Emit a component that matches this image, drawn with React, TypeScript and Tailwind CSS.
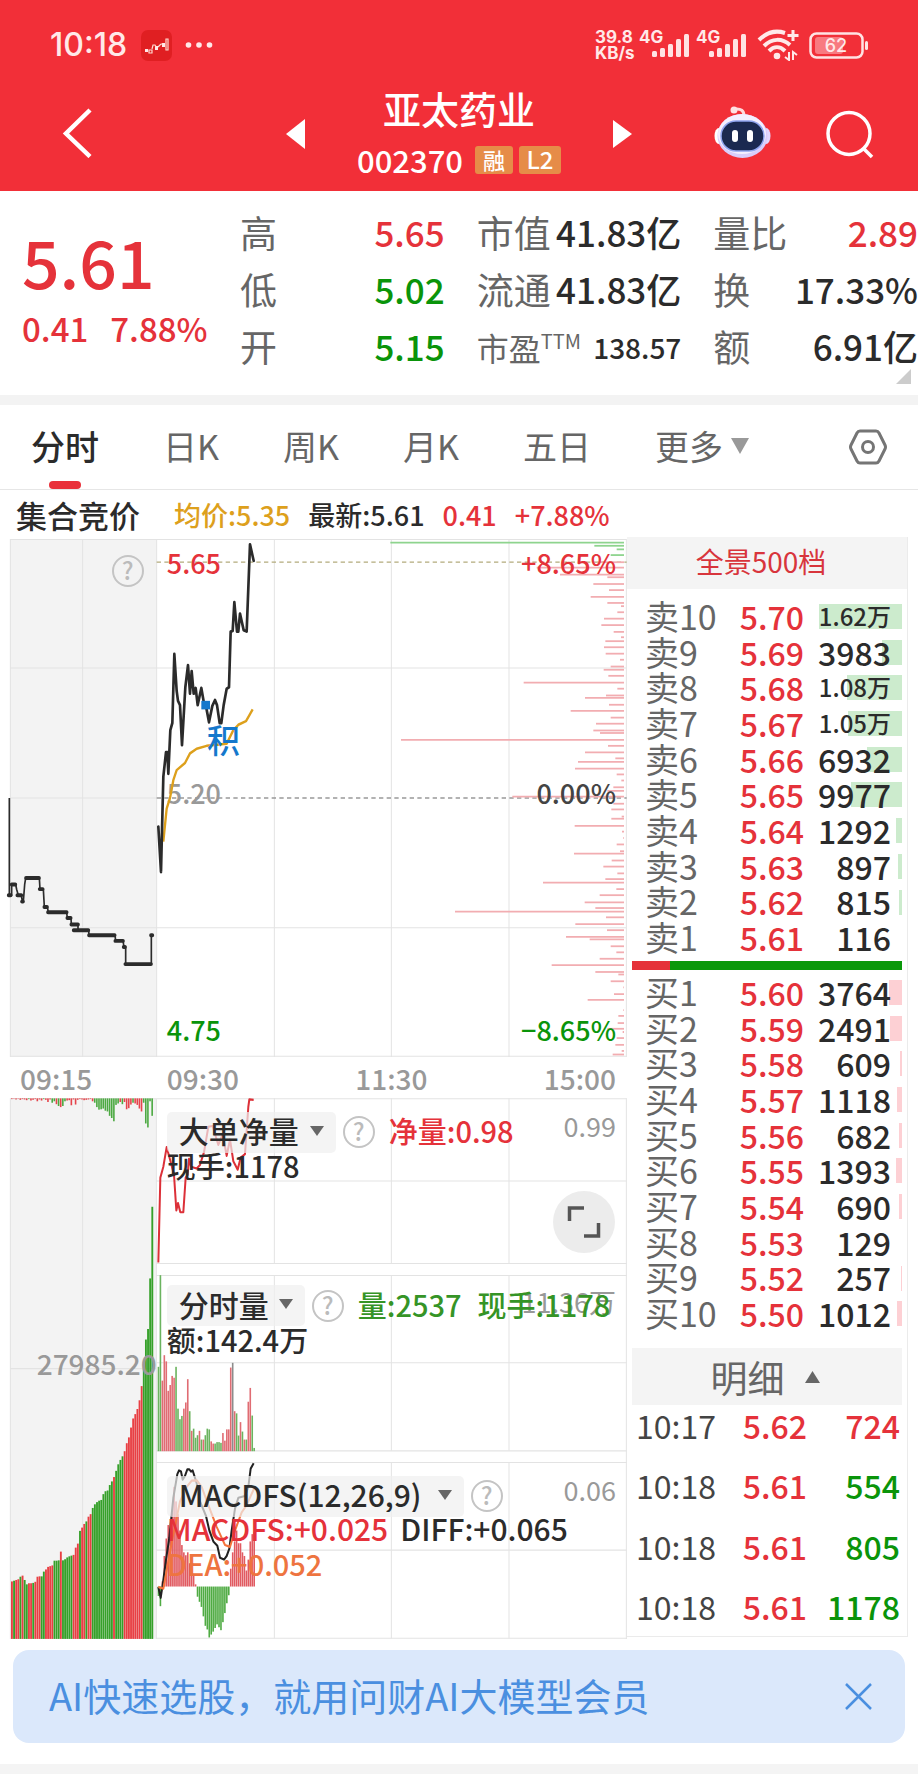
import { ReactNode } from 'react'
import clsx from 'clsx'

const RED = '#e5323a'
const GREEN = '#0a940a'

type Level = { label: string; price: string; volume: string; bar: number }

const asks: Level[] = [
  { label: '卖10', price: '5.70', volume: '1.62万', bar: 83 },
  { label: '卖9', price: '5.69', volume: '3983', bar: 20 },
  { label: '卖8', price: '5.68', volume: '1.08万', bar: 55 },
  { label: '卖7', price: '5.67', volume: '1.05万', bar: 54 },
  { label: '卖6', price: '5.66', volume: '6932', bar: 35 },
  { label: '卖5', price: '5.65', volume: '9977', bar: 51 },
  { label: '卖4', price: '5.64', volume: '1292', bar: 6 },
  { label: '卖3', price: '5.63', volume: '897', bar: 4 },
  { label: '卖2', price: '5.62', volume: '815', bar: 3 },
  { label: '卖1', price: '5.61', volume: '116', bar: 0 },
]

const bids: Level[] = [
  { label: '买1', price: '5.60', volume: '3764', bar: 13 },
  { label: '买2', price: '5.59', volume: '2491', bar: 12 },
  { label: '买3', price: '5.58', volume: '609', bar: 2 },
  { label: '买4', price: '5.57', volume: '1118', bar: 5 },
  { label: '买5', price: '5.56', volume: '682', bar: 3 },
  { label: '买6', price: '5.55', volume: '1393', bar: 6 },
  { label: '买7', price: '5.54', volume: '690', bar: 3 },
  { label: '买8', price: '5.53', volume: '129', bar: 0 },
  { label: '买9', price: '5.52', volume: '257', bar: 1 },
  { label: '买10', price: '5.50', volume: '1012', bar: 5 },
]

const trades = [
  { time: '10:17', price: '5.62', volume: '724', up: true },
  { time: '10:18', price: '5.61', volume: '554', up: false },
  { time: '10:18', price: '5.61', volume: '805', up: false },
  { time: '10:18', price: '5.61', volume: '1178', up: false },
]

const pricePoints =
  '475,830 483,957 490,690 498,622 502,622 505,682 511,560 517,540 523,347 530,450 534,478 540,490 546,602 556,440 564,378 570,458 575,395 581,458 587,442 593,490 604,442 611,480 617,488 627,538 637,492 645,476 651,490 659,540 664,540 671,490 680,444 687,440 692,284 698,282 703,202 711,284 715,284 720,234 731,280 740,284 750,40 761,86'
const averagePoints =
  '490,872 500,780 510,750 520,700 530,672 555,652 570,625 590,612 620,604 680,598 700,560 715,545 738,535 750,515 758,502'
const auctionPoints =
  '28,750 28,1022 35,1022 35,992 47,992 50,1006 55,1022 64,1022 67,1040 70,1040 74,992 77,974 118,974 120,1005 130,1005 133,1055 142,1055 145,1070 200,1070 202,1086 213,1086 214,1104 234,1104 234,1120 266,1120 267,1134 345,1134 347,1150 369,1150 372,1167 377,1167 377,1215 454,1215 454,1134'
const auctionSteps =
  'M26 1022H32M35 992H46M52 1022H64M66 1040H69M78 974H117M119 1005H128M133 1055H141M144 1070H200M202 1086H212M214 1104H234M221 1120H265M267 1134H344M346 1150H369M371 1167H375M376 1215H453M453 1134H457'

// [y, left edge] of the chips distribution, drawn against the right side
const askDepth = [[35, 1171], [44, 1783], [54, 1850], [70, 1832]]
const bidDepth = [
  [90, 832], [105, 650], [125, 720], [132, 862], [151, 820], [168, 867], [187, 812], [204, 862], [213, 903], [230, 892],
  [248, 852], [266, 844], [285, 881], [300, 903], [311, 856], [328, 852], [346, 857], [363, 900], [382, 872], [391, 851],
  [408, 865], [427, 611], [444, 892], [463, 858], [470, 795], [489, 867], [506, 752], [525, 872], [542, 828], [561, 820],
  [568, 840], [587, 243], [604, 864], [622, 795], [639, 886], [649, 774], [668, 765], [684, 890], [701, 904], [720, 880],
  [730, 862], [746, 577], [766, 880], [782, 874], [802, 905], [808, 874], [828, 764], [844, 906], [862, 910], [880, 890],
  [899, 900], [906, 762], [925, 875], [942, 850], [961, 892], [977, 856], [987, 669], [1005, 889], [1022, 839], [1042, 794],
  [1058, 826], [1068, 405], [1084, 858], [1103, 766], [1120, 861], [1139, 738], [1146, 809], [1165, 872], [1182, 889],
  [1200, 839], [1218, 695], [1237, 826], [1244, 895], [1263, 872], [1280, 910], [1299, 882], [1315, 803], [1344, 910],
  [1360, 895], [1380, 893], [1396, 862], [1405, 908], [1422, 890], [1441, 886], [1458, 905], [1468, 878],
]

const auctionVolume = [
  1380, 1378, 1376, 1374, 1367, 1364, 1376, 1388, 1385, 1385, 1384, 1381, 1367, 1366, 1366, 1353, 1347, 1340, 1338, 1336,
  1323, 1323, 1322, 1298, 1322, 1319, 1314, 1311, 1309, 1307, 1287, 1276, 1241, 1232, 1222, 1215, 1202, 1195, 1178, 1168,
  1162, 1158, 1156, 1140, 1132, 1130, 1115, 1105, 1093, 1076, 1058, 1046, 1036, 1022, 1000, 984, 957, 932, 920, 906, 882,
  843, 795, 715, 686, 547, 350,
]
const auctionVolumeSides = 'rgrrgrggrrgrrrggrrrrgggrgggggrrrgrrgrrggggggggggrggggrrrrrrrrrggggg'

const auctionUnmatched = [
  54, 53, 55, 53, 56, 54, 55, 57, 54, 58, 56, 54, 60, 55, 58, 54, 56, 62, 55, 64, 60, 68, 73, 76, 73, 60, 58, 57, 71, 55,
  69, 56, 54, 55, 57, 56, 55, 54, 60, 64, 76, 83, 82, 80, 86, 88, 100, 106, 115, 70, 66, 62, 68, 62, 82, 79, 69, 64, 66,
  70, 80, 88, 64, 121, 132, 60, 100,
]
const auctionUnmatchedSides = 'rrrrrrrrgrrrrrrgrrrggrgrggrrrrrrrrrrrrrggggggggggggrgrrrrgrrrrggggg'

const minuteVolume = [
  790, 538, 828, 758, 775, 856, 840, 815, 820, 790, 905, 934, 925, 905, 888, 824, 912, 966, 960, 985, 978, 966, 990, 990,
  978, 960, 962, 995, 1001, 1001, 997, 997, 999, 972, 993, 962, 962, 792, 779, 912, 918, 979, 942, 968, 990, 990, 886,
  848, 924, 1013,
]
const minuteVolumeSides = 'ggrrrrrrrggggrrrgrgggrgrgggrrggggrrrrrkrggrgrgrrgg'

const macdBars = [
  1420, 1448, 1380, 1310, 1262, 1225, 1235, 1190, 1120, 1160, 1195, 1240, 1280, 1300, 1308, 1300, 1330, 1345, 1365, 1388,
  1422, 1436, 1450, 1476, 1502, 1512, 1534, 1526, 1518, 1508, 1498, 1506, 1514, 1492, 1467, 1440, 1418, 1345, 1300, 1270,
  1240, 1275, 1275, 1300, 1310, 1350, 1320, 1270, 1250, 1245,
]

const netPoints =
  '475,503 481,270 490,240 500,186 510,220 522,262 529,360 534,340 541,365 550,365 557,270 563,262 567,218 573,240 590,245 600,235 612,200 625,130 638,128 650,165 655,180 668,150 680,210 690,165 700,225 713,248 722,215 735,205 745,75 748,55 761,56'
const diffPoints =
  '475,1395 482,1425 488,1390 498,1320 508,1260 520,1150 532,1085 537,1075 543,1078 548,1100 555,1090 562,1072 568,1072 573,1078 578,1075 590,1110 600,1160 618,1200 628,1240 640,1270 652,1282 660,1315 672,1320 680,1310 688,1290 695,1240 705,1180 715,1150 735,1145 745,1120 752,1070 761,1055'
const deaPoints =
  '475,1395 490,1400 500,1350 520,1250 540,1160 560,1120 575,1103 590,1102 605,1120 625,1170 650,1230 675,1280 690,1285 705,1240 725,1190 740,1170 752,1145 762,1125'

function Signal() {
  return (
    <svg width="38" height="24" viewBox="0 0 38 24" fill="#ffe3e3" aria-hidden="true">
      <rect x="0" y="17" width="5" height="6" rx="1.5" />
      <rect x="8" y="14" width="5" height="9" rx="1.5" />
      <rect x="16" y="10" width="5" height="13" rx="1.5" />
      <rect x="24" y="5" width="5" height="18" rx="1.5" />
      <rect x="32" y="0" width="5" height="23" rx="1.5" />
    </svg>
  )
}

function StatusBar() {
  return (
    <div className="flex h-[66px] items-start justify-between pt-[27px] pr-[49px] pl-[50px] text-[#ffe9e9]">
      <div className="flex h-9 items-center">
        <span className="font-[Inter,'Noto_Sans_CJK_SC',sans-serif] text-[32px] leading-9 font-medium">10:18</span>
        <svg className="ml-[14px]" width="31" height="31" viewBox="0 0 31 31" aria-hidden="true">
          <rect width="31" height="31" rx="7" fill="#e01f22" />
          <path d="M4 19h3v3H4zM14 16h3v4h-3zM21 13h3v4h-3z" fill="#ffe9e9" />
          <path d="M8 20h3v3H8zM11 19l1-4h2l1 2M17 17l3-3M20 14h2M25 9h2v11h-2z" fill="none" stroke="#ffd9d0" strokeWidth="1.2" />
        </svg>
        <svg className="ml-[13px]" width="28" height="6" viewBox="0 0 28 6" fill="#ffe9e9" aria-hidden="true">
          <circle cx="3.5" cy="3" r="2.8" />
          <circle cx="14" cy="3" r="2.8" />
          <circle cx="24.5" cy="3" r="2.8" />
        </svg>
      </div>
      <div className="flex h-9 items-start font-[Inter,'Noto_Sans_CJK_SC',sans-serif] text-[17px] leading-4 font-bold">
        <div className="w-[44px] pt-[2px]">
          <div>39.8</div>
          <div>KB/s</div>
        </div>
        <div className="relative w-[57px] pt-[2px]">
          4G
          <span className="absolute top-[7px] left-[13px]"><Signal /></span>
        </div>
        <div className="relative w-[61px] pt-[2px]">
          4G
          <span className="absolute top-[7px] left-[13px]"><Signal /></span>
        </div>
        <svg className="mt-[2px]" width="44" height="32" viewBox="0 0 44 32" fill="none" stroke="#ffe9e9" aria-hidden="true">
          <path d="M2 11C10 3 19 1 28 4" strokeWidth="4" />
          <path d="M7 17c8-8 18-8 26-1" strokeWidth="4" />
          <path d="M12 22c5-5 11-5 16 0" strokeWidth="4" />
          <circle cx="20" cy="27" r="3.3" fill="#ffe9e9" stroke="none" />
          <path d="M36 1v11M30.5 6.500h11" strokeWidth="3" />
          <path d="M32 23v8l-4-3M36 31v-8l4 3" strokeWidth="2" />
        </svg>
        <svg className="mt-[5px] ml-[8px]" width="60" height="27" viewBox="0 0 60 27" aria-hidden="true">
          <rect x="1.5" y="1.5" width="52" height="24" rx="6" fill="none" stroke="#ffe3e3" strokeWidth="2.5" />
          <rect x="6" y="5" width="28" height="17" rx="3" fill="#f87a80" />
          <rect x="56" y="9" width="3" height="9" rx="1.5" fill="#ffe3e3" />
          <text x="27" y="20" textAnchor="middle" fontSize="18" fontWeight="500" fill="#ffe9e9">62</text>
        </svg>
      </div>
    </div>
  )
}

function Robot() {
  return (
    <svg width="57" height="53" viewBox="0 0 57 53" aria-hidden="true">
      <path d="M21 3q9-1 9 7" fill="none" stroke="#ffd9dc" strokeWidth="3" />
      <circle cx="20" cy="4" r="3.5" fill="#ffe0e2" />
      <ellipse cx="5" cy="30" rx="4.5" ry="8" fill="#fff" />
      <ellipse cx="52" cy="30" rx="4.5" ry="8" fill="#e2d8ff" />
      <ellipse cx="28.5" cy="30" rx="25" ry="22" fill="#d9cdfb" />
      <ellipse cx="28" cy="28" rx="24" ry="20" fill="#f4efff" />
      <rect x="7" y="15" width="43" height="30" rx="15" fill="#1b2950" stroke="#8fa4ee" strokeWidth="1.5" />
      <rect x="18" y="24" width="6" height="12" rx="3" fill="#fff" />
      <rect x="33" y="24" width="6" height="12" rx="3" fill="#fff" />
    </svg>
  )
}

function Header() {
  return (
    <header className="bg-[#f22f38] text-white">
      <StatusBar />
      <div className="grid h-[125px] grid-cols-[1fr_auto_1fr] items-start">
        <button className="mt-[42px] ml-[60px] w-9" aria-label="返回">
          <svg width="34" height="50" viewBox="0 0 34 50" fill="none" stroke="#fff" strokeWidth="4.5" aria-hidden="true">
            <path d="M30 2 6 25.500 30 48.500" />
          </svg>
        </button>
        <div className="flex w-[346px] items-start justify-between">
          <button className="mt-[53px]" aria-label="上一只">
            <svg width="19" height="30" viewBox="0 0 19 30" fill="#fff" aria-hidden="true"><path d="M19 0v30L0 15z" /></svg>
          </button>
          <div className="flex flex-col items-center pt-5">
            <h1 className="text-[38px] leading-[44px] font-medium">亚太药业</h1>
            <div className="mt-[14px] flex items-center text-[31px] leading-8 font-medium">
              <span>002370</span>
              <span className="ml-[12px] h-7 w-[38px] rounded-[3px] bg-[#e68c48] text-center text-[22px] leading-[26px]">融</span>
              <span className="ml-[6px] h-7 w-[42px] rounded-[3px] bg-[#e68c48] text-center text-[24px] leading-[26px]">L2</span>
            </div>
          </div>
          <button className="mt-[54px]" aria-label="下一只">
            <svg width="19" height="28" viewBox="0 0 19 28" fill="#fff" aria-hidden="true"><path d="M0 0v28l19-14z" /></svg>
          </button>
        </div>
        <div className="flex justify-end pr-[44px]">
          <button className="mt-[40px]" aria-label="智能助手"><Robot /></button>
          <button className="mt-[44px] ml-[54px]" aria-label="搜索">
            <svg width="49" height="49" viewBox="0 0 49 49" fill="none" stroke="#fff" strokeWidth="3.5" aria-hidden="true">
              <circle cx="24" cy="23.5" r="21" />
              <path d="m38 38 9 9" />
            </svg>
          </button>
        </div>
      </div>
    </header>
  )
}

function Stat({ label, value, tone }: { label: ReactNode; value: string; tone?: string }) {
  return (
    <div className="flex h-[57px] items-center justify-between whitespace-nowrap">
      <dt className="text-[37px] text-[#666]">{label}</dt>
      <dd className={clsx('text-[35px] font-medium', tone || 'text-[#2b2b2b]')}>{value}</dd>
    </div>
  )
}

function Quote() {
  return (
    <section className="relative flex border-b-[10px] border-[#f3f3f3] pt-[13px] pb-5">
      <div className="w-[240px] shrink-0 pt-[18px] pl-[22px] font-medium text-[#e5323a]">
        <div className="text-[66px] leading-[76px]">5.61</div>
        <div className="mt-[10px] flex gap-[22px] text-[33px] leading-10">
          <span>0.41</span>
          <span>7.88%</span>
        </div>
      </div>
      <div className="grid flex-1 grid-cols-3 gap-8">
        <dl>
          <Stat label="高" value="5.65" tone="text-[#e5323a]" />
          <Stat label="低" value="5.02" tone="text-[#0a940a]" />
          <Stat label="开" value="5.15" tone="text-[#0a940a]" />
        </dl>
        <dl>
          <Stat label="市值" value="41.83亿" />
          <Stat label="流通" value="41.83亿" />
          <div className="flex h-[57px] items-center justify-between whitespace-nowrap">
            <dt className="flex items-start text-[32px] leading-9 text-[#666]">
              市盈<span className="text-[20px] leading-6">TTM</span>
            </dt>
            <dd className="text-[28px] font-medium text-[#2b2b2b]">138.57</dd>
          </div>
        </dl>
        <dl>
          <Stat label="量比" value="2.89" tone="text-[#e5323a]" />
          <Stat label="换" value="17.33%" />
          <Stat label="额" value="6.91亿" />
        </dl>
      </div>
      <svg className="absolute right-[7px] bottom-[11px]" width="15" height="15" viewBox="0 0 15 15" fill="#ccc" aria-hidden="true">
        <path d="M15 0v15H0z" />
      </svg>
    </section>
  )
}

function Tabs() {
  return (
    <nav className="flex h-[85px] items-stretch gap-16 border-b border-[#e6e6e6] pr-[31px] pl-[31px] text-[34px] text-[#666]">
      <button className="relative pb-1 font-medium text-[#2b2b2b]">
        分时
        <span className="absolute bottom-0 left-[18px] h-2 w-8 rounded-full bg-[#e9303a]" />
      </button>
      {['日K', '周K', '月K', '五日'].map((name) => (
        <button key={name} className="pb-1">{name}</button>
      ))}
      <button className="flex items-center gap-2 pb-1" aria-haspopup="menu">
        更多
        <svg width="18" height="17" viewBox="0 0 18 17" fill="#999" aria-hidden="true"><path d="M0 1h18L9 17z" /></svg>
      </button>
      <button className="ml-auto" aria-label="设置">
        <svg width="38" height="38" viewBox="0 0 38 38" fill="none" stroke="#757575" strokeWidth="3" strokeLinejoin="round" aria-hidden="true">
          <path d="M11 3h16q2 0 3 2l6 12q1 2 0 4l-6 12q-1 2-3 2H11q-2 0-3-2L2 21q-1-2 0-4L8 5q1-2 3-2z" />
          <circle cx="19" cy="19" r="5.5" />
        </svg>
      </button>
    </nav>
  )
}

function Help() {
  return (
    <button className="grid size-8 shrink-0 place-items-center rounded-full border-2 border-[#c4c4c4] text-[24px] leading-7 text-[#bbb]" aria-label="说明">
      <span className="-translate-y-px">?</span>
    </button>
  )
}

function Indicator({ name, width }: { name: string; width: string }) {
  return (
    <span className={clsx('relative block h-[41px] shrink-0 rounded-[5px] bg-[#efefef]/70', width)}>
      <select aria-label="指标" className="block h-[41px] w-full appearance-none bg-transparent pb-1 pl-3 text-[30px] leading-9 text-[#2b2b2b] font-medium">
        <option>{name}</option>
      </select>
      <svg className="pointer-events-none absolute top-[14px] right-3" width="14" height="10" viewBox="0 0 14 10" fill="#666" aria-hidden="true">
        <path d="M0 0h14L7 10z" />
      </svg>
    </span>
  )
}

function PriceChart() {
  return (
    <div className="relative h-[518px]">
      <svg className="absolute inset-0 size-full" viewBox="0 25 1881 1450" preserveAspectRatio="none" aria-hidden="true">
        <rect x="30" y="25" width="440" height="1450" fill="#f3f3f3" />
        <path d="M30 26H1880M30 386H1880M30 750H470M30 1113H1880M30 1473H1880M31 25V1475M248 25V1475M470 25V1475M823 25V1475M1174 25V1475M1527 25V1475M1879 25V1475" fill="none" stroke="#e3e3e3" strokeWidth="3" />
        <path d="M470 90H1880" stroke="#b3ab7c" strokeWidth="3.5" strokeDasharray="13 10" />
        <path d="M470 750H1880" stroke="#999" strokeWidth="3.5" strokeDasharray="13 10" />
        {askDepth.map(([y, x]) => (
          <path key={y} d={`M${x} ${y}H1872`} stroke="#8ed48e" strokeWidth="5" />
        ))}
        {bidDepth.map(([y, x]) => (
          <path key={y} d={`M${x + 960} ${y}H1872`} stroke="#f2adb1" strokeWidth="5" />
        ))}
        <g fill="none" strokeLinejoin="round">
          <polyline points={auctionPoints} stroke="#2b2b2b" strokeWidth="5" />
          <path d={auctionSteps} stroke="#2b2b2b" strokeWidth="11" strokeLinecap="round" />
        </g>
      </svg>
      <div className="absolute inset-0 flex text-[27px] leading-[34px] font-medium">
        <div className="flex w-1/4 justify-end pt-[16px] pr-[13px]"><Help /></div>
        <div className="flex flex-1 flex-col justify-between pt-[7px] pr-[11px] pb-[10px] pl-[10px]">
          <div className="flex justify-between text-[#e5323a]"><span>5.65</span><span>+8.65%</span></div>
          <div className="mb-[8px] flex justify-between"><span className="text-[#999]">5.20</span><span className="text-[#444]">0.00%</span></div>
          <div className="flex justify-between text-[#0a940a]"><span>4.75</span><span>−8.65%</span></div>
        </div>
      </div>
      <svg className="absolute inset-0 size-full" viewBox="0 25 1881 1450" preserveAspectRatio="none" fill="none" strokeLinejoin="round" aria-hidden="true">
        <polyline points={averagePoints} stroke="#dda01c" strokeWidth="7" />
        <polyline points={pricePoints} stroke="#2b2b2b" strokeWidth="8" strokeLinecap="round" />
        <rect x="604" y="478" width="26" height="24" fill="#1478cc" />
      </svg>
      <span className="absolute top-[182px] left-1/3 -ml-0.5 text-[33px] leading-9 font-medium text-[#1478cc]">积</span>
    </div>
  )
}

function bar(x: number, top: number, bottom: number, fill: string, key: number) {
  return <rect key={key} x={x} y={Math.min(top, bottom)} width="4.8" height={Math.abs(bottom - top)} fill={fill} />
}

function IndicatorCharts() {
  return (
    <div className="relative h-[542px]">
      <svg className="absolute inset-0 size-full" viewBox="0 51 1881 1490" preserveAspectRatio="none" aria-hidden="true">
        <rect x="30" y="52" width="438" height="1486" fill="#f3f3f3" />
        <path d="M30 53H1880M470 279H1880M470 506H1880M470 539H1880M470 779H1880M470 1021H1880M470 1053H1880M470 1294H1880M470 1536H1880M30 795H468M31 52V1538M248 52V1538M469 52V1538" fill="none" stroke="#e3e3e3" strokeWidth="3" />
        <path d="M823 52V506M823 539V1021M823 1053V1536M1174 52V506M1174 539V1021M1174 1053V1536M1527 52V506M1527 539V1021M1527 1053V1536M1879 52V1538" fill="none" stroke="#e3e3e3" strokeWidth="3" />
        {auctionVolume.map((top, i) => (
          <rect key={i} x={33 + i * 6.38} y={top} width="5.6" height={1538 - top} fill={auctionVolumeSides[i] === 'r' ? '#e83f43' : '#35a029'} />
        ))}
        <g opacity="0.9">
          {auctionUnmatched.map((end, i) => bar(33 + i * 6.38, 52, end, auctionUnmatchedSides[i] === 'r' ? '#e5323a' : '#3ba22f', i))}
        </g>
        {minuteVolume.map((top, i) =>
          bar(473 + i * 5.86, top, 1022, minuteVolumeSides[i] === 'r' ? '#e06c73' : minuteVolumeSides[i] === 'k' ? '#8c8c8c' : '#6bb35f', i)
        )}
        {macdBars.map((end, i) => bar(473 + i * 5.86, 1394, end, end < 1394 ? '#e15a61' : '#4fab43', i))}
        <g fill="none" strokeLinejoin="round">
          <polyline points={netPoints} stroke="#dc3038" strokeWidth="6" />
          <polyline points={diffPoints} stroke="#222" strokeWidth="6" />
          <polyline points={deaPoints} stroke="#f5743c" strokeWidth="6" />
        </g>
      </svg>
      <div className="absolute inset-0 flex text-[29px] leading-9 font-medium">
        <div className="flex w-1/4 justify-end pt-[247px] text-[28px] text-[#999]">27985.20</div>
        <div className="flex-1 pl-[10px]">
          <div className="h-[177px] pt-[10px]">
            <div className="flex items-center">
              <Indicator name="大单净量" width="w-[169px]" />
              <span className="ml-[7px]"><Help /></span>
              <span className="mb-1 ml-[14px] text-[#e5323a]">净量:0.98</span>
              <span className="mr-[11px] mb-3 ml-auto text-[27px] font-normal text-[#999]">0.99</span>
            </div>
            <div className="-mt-[9px] text-[#2b2b2b]">现手:1178</div>
          </div>
          <div className="relative h-[187px] pt-[10px]">
            <span className="absolute top-[9px] right-[11px] text-[27px] font-normal text-[#999]">11.36万</span>
            <div className="relative flex items-center text-[#359426]">
              <Indicator name="分时量" width="w-[138px]" />
              <span className="ml-[7px]"><Help /></span>
              <span className="mb-1 ml-[14px]">量:2537</span>
              <span className="mb-1 ml-[16px]">现手:1178</span>
            </div>
            <div className="-mt-[5px] text-[#2b2b2b]">额:142.4万</div>
          </div>
          <div className="pt-[10px]">
            <div className="flex items-center">
              <Indicator name="MACDFS(12,26,9)" width="w-[297px]" />
              <span className="ml-[7px]"><Help /></span>
              <span className="mr-[11px] mb-3 ml-auto text-[27px] font-normal text-[#999]">0.06</span>
            </div>
            <div className="-mt-[10px] flex gap-3 text-[30px] whitespace-nowrap">
              <span className="text-[#e5323a]">MACDFS:+0.025</span>
              <span className="text-[#2b2b2b]">DIFF:+0.065</span>
            </div>
            <div className="-mt-px text-[#ee7440]">DEA:+0.052</div>
          </div>
        </div>
      </div>
      <button className="absolute top-[93px] right-[12px] grid size-[62px] place-items-center rounded-full bg-[#ececec]" aria-label="全屏">
        <svg width="34" height="34" viewBox="0 0 34 34" fill="none" stroke="#555" strokeWidth="3.5" aria-hidden="true">
          <path d="M2.500 16V3H17M31.500 18v13H17" />
        </svg>
      </button>
    </div>
  )
}

function Levels({ rows, side }: { rows: Level[]; side: 'ask' | 'bid' }) {
  return (
    <table className="h-[357px] w-full table-fixed border-collapse leading-[34px]">
      <tbody>
        {rows.map((row) => (
          <tr key={row.label}>
            <th scope="row" className="w-[100px] p-0 pl-[18px] text-left align-middle text-[34px] font-normal text-[#666]">{row.label}</th>
            <td className="w-[77px] p-0 text-right align-middle text-[32px] font-medium text-[#e5323a]">{row.price}</td>
            <td className="relative p-0 pr-4 text-right align-middle font-medium text-[#2b2b2b]">
              <span
                className={clsx('absolute top-[6px] right-[5px] h-[25px]', side === 'ask' ? 'bg-[#ccebcd]' : 'bg-[#fdd0d4]')}
                style={{ width: row.bar }}
              />
              <span className={clsx('relative block', row.volume.includes('万') ? 'text-[24px]' : 'text-[32px]')}>{row.volume}</span>
            </td>
          </tr>
        ))}
      </tbody>
    </table>
  )
}

function OrderBook() {
  return (
    <aside className="w-[281px] shrink-0 border-r border-b border-[#ebebeb]">
      <button className="block h-[52px] w-full bg-[#f4f4f4] pr-3 pb-1 text-[28px] text-[#d8353c]">全景500档</button>
      <div className="pt-[9px]">
        <Levels rows={asks} side="ask" />
      </div>
      <div className="mt-[6px] mr-[5px] ml-[5px] flex h-[9px]">
        <div className="w-[14%] bg-[#e5323a]" />
        <div className="flex-1 bg-[#0a980a]" />
      </div>
      <div className="pt-[4px]">
        <Levels rows={bids} side="bid" />
      </div>
      <div className="mt-[17px] mr-[5px] ml-[5px]">
        <button className="flex h-[57px] w-full items-center justify-center gap-[20px] bg-[#f4f4f4] pr-[4px] text-[37px] leading-10 text-[#666]">
          明细
          <svg width="15" height="12" viewBox="0 0 15 12" fill="#666" aria-hidden="true"><path d="M7.500 0 15 12H0z" /></svg>
        </button>
      </div>
      <table className="-mt-[10px] h-[241px] w-full table-fixed border-collapse text-[32px] leading-9">
        <tbody>
          {trades.map((t, i) => (
            <tr key={i}>
              <td className="w-[90px] p-0 pl-[9px] text-[#444]">{t.time}</td>
              <td className="w-[90px] p-0 text-right font-medium text-[#e5323a]">{t.price}</td>
              <td className="p-0 pr-[7px] text-right font-medium" style={{ color: t.up ? RED : GREEN }}>{t.volume}</td>
            </tr>
          ))}
        </tbody>
      </table>
    </aside>
  )
}

export default function App() {
  return (
    <div className="bg-white font-['Noto_Sans_CJK_SC',sans-serif]">
      <Header />
      <Quote />
      <Tabs />
      <main className="flex pr-[10px]">
        <section className="min-w-0 flex-1">
          <div className="flex h-[49px] items-center gap-[18px] pl-4 text-[27px] leading-9 font-medium whitespace-nowrap">
            <span className="mr-4 text-[31px] text-[#2b2b2b]">集合竞价</span>
            <span className="text-[#dda01c]">均价:5.35</span>
            <span className="text-[#2b2b2b]">最新:5.61</span>
            <span className="text-[#e5323a]">0.41</span>
            <span className="text-[#e5323a]">+7.88%</span>
          </div>
          <PriceChart />
          <div className="flex h-[41px] items-center text-[28px] leading-9 font-medium text-[#999]">
            <span className="w-1/4 pl-[20px]">09:15</span>
            <div className="grid flex-1 grid-cols-3 pr-[11px] pl-[10px]">
              <span>09:30</span>
              <span className="text-center">11:30</span>
              <span className="text-right">15:00</span>
            </div>
          </div>
          <IndicatorCharts />
        </section>
        <div className="flex items-start pt-[47px]">
          <OrderBook />
        </div>
      </main>
      <div className="mx-[13px] mt-[10px] flex h-[93px] items-center justify-between rounded-2xl bg-[#dbe8fb] pr-[33px] pl-[36px]">
        <a href="#ai" className="pb-1 text-[38px] leading-[44px] whitespace-nowrap text-[#4a8fe0]">AI快速选股，就用问财AI大模型会员</a>
        <button aria-label="关闭">
          <svg width="27" height="27" viewBox="0 0 27 27" fill="none" stroke="#4a8fe0" strokeWidth="2.5" aria-hidden="true">
            <path d="m1 1 25 25M26 1 1 26" />
          </svg>
        </button>
      </div>
      <div className="mt-[21px] h-[10px] bg-[#f4f4f4]" />
      <div className="h-4" />
    </div>
  )
}
